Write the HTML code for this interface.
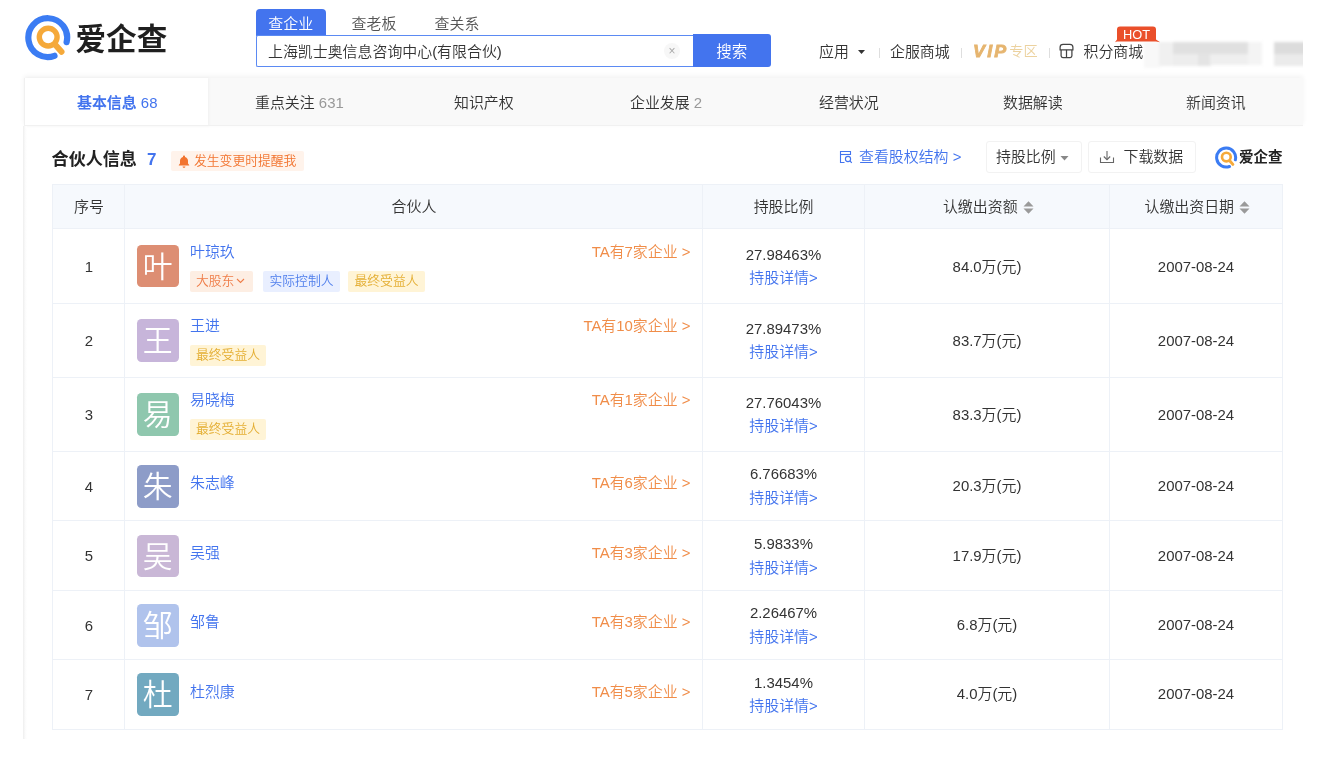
<!DOCTYPE html>
<html lang="zh-CN">
<head>
<meta charset="utf-8">
<title>爱企查 - 上海凯士奥信息咨询中心(有限合伙)</title>
<style>
*{box-sizing:border-box;margin:0;padding:0}
html,body{width:1332px;height:774px;background:#fff;overflow:hidden}
body{will-change:transform}
body{position:relative;font-weight:350;font-family:"Liberation Sans","Noto Sans CJK SC",sans-serif;font-size:14.93px;color:#333;-webkit-font-smoothing:antialiased}
.abs{position:absolute;white-space:nowrap}
a{text-decoration:none;color:inherit}

/* header */
#logo-ico{left:25px;top:14px;width:47px;height:47px}
#logo-txt{left:75.5px;top:16.5px;font-size:30.6px;line-height:44px;font-weight:700;color:#1f1f1f;letter-spacing:0px}
.stab{top:8.5px;height:27px;line-height:29px;font-size:14.93px;color:#555;text-align:center}
#stab1{left:255.5px;width:70.5px;background:#4374ee;color:#fff;border-radius:4px 4px 0 0}
#stab2{left:351px;width:46px}
#stab3{left:434px;width:46px}
#sinput{left:255.5px;top:34.5px;width:439px;height:32px;border:1px solid #5b8af3;border-right:none;border-radius:2px 0 0 2px;background:#fff;font-size:14.93px;line-height:31.5px;padding-left:11.5px;color:#333}
#sclear{left:664px;top:43px;width:16px;height:16px;border-radius:50%;background:#f7f7f7;color:#aaa;font-size:12px;line-height:16px;text-align:center}
#sbtn{left:693px;top:34px;width:77.5px;height:32.5px;background:#4374ee;color:#fff;border-radius:0 3px 3px 0;font-size:15.5px;line-height:35px;text-align:center}
.hl{top:41px;height:22px;line-height:22px;font-size:14.93px;color:#333}
.hsep{top:47.500px;width:1px;height:10px;background:#dedede}

/* nav */
#nav{left:23.500px;top:77.500px;width:1279.500px;height:48.500px;background:#f9f9f9;box-shadow:0 -2px 5px rgba(0,0,0,.05)}
#nav .on{position:absolute;left:0;top:0;width:184.500px;height:100%;background:#fff;box-shadow:1px 0 3px rgba(0,0,0,.04)}
.nt{top:91.5px;height:22px;line-height:22px;font-size:14.93px;color:#333}
.nt i{font-style:normal;color:#999}

/* section head */
#ttl{left:51.600px;top:147px;height:26px;line-height:26px;font-size:17.070px;font-weight:700;color:#222}
#ttl b{color:#4374ee;margin-left:10px;font-size:17px}
#remind{left:171px;top:150.5px;width:132.5px;height:20.5px;background:#fff3eb;border-radius:2px;color:#f2742f;font-size:12.8px;line-height:20.5px;padding-left:23px}
#remind svg{position:absolute;left:6.5px;top:4px}

/* table */
.hd{top:184.500px;height:44px;background:#f6f9fd}
.vl{top:184px;width:1px;height:545.800px;background:#edf1f7}
.hlr{left:51.700px;width:1230.600px;height:1px;background:#edf1f7}
.th{top:196px;height:22px;line-height:22px;font-size:14.93px;color:#333;text-align:center}
.c{text-align:center}
.idx{left:53px;width:72px;font-size:14.93px;color:#333;height:20px;line-height:20px}
.av{left:136.600px;width:42.200px;height:42.700px;border-radius:4.500px;color:#fff;font-size:29.870px;line-height:43.500px;text-align:center}
.nm{left:190px;height:22px;line-height:22px;font-size:14.93px;color:#4374ee}
.tag{height:20.500px;line-height:20.500px;font-size:12.800px;padding:0 0 0 6.500px;border-radius:2px}
.t1{background:#fdeee3;color:#ef7d48;width:63px}
.t2{background:#e9efff;color:#4f7eec;width:77px}
.t3{background:#fff4d6;color:#e4ae33;width:76.500px}
.ta{right:641.5px;height:22px;line-height:22px;font-size:14.93px;color:#f08d49}
.pc{left:703px;width:161px;height:22px;line-height:22px;font-size:14.93px;color:#333}
.pd{left:703px;width:161px;height:22px;line-height:22px;font-size:14.93px;color:#4374ee}
.amt{left:864px;width:246px;height:22px;line-height:22px;font-size:14.93px;color:#333}
.dt{left:1110px;width:172px;height:22px;line-height:22px;font-size:14.93px;color:#333}
</style>
</head>
<body>

<!-- ===== header ===== -->
<svg id="logo-ico" class="abs" viewBox="0 0 47 47">
  <path d="M 41.6 28.2 A 19.4 19.4 0 1 0 29.5 41.8" fill="none" stroke="#3b7cf3" stroke-width="6.2" stroke-linecap="round"/>
  <circle cx="23.2" cy="23.1" r="8.9" fill="none" stroke="#f5a93a" stroke-width="5.4"/>
  <path d="M 30.5 31 L 36.5 37.7" stroke="#f5a93a" stroke-width="6" stroke-linecap="round"/>
</svg>
<div id="logo-txt" class="abs">爱企查</div>

<div id="stab1" class="abs stab">查企业</div>
<div id="stab2" class="abs stab">查老板</div>
<div id="stab3" class="abs stab">查关系</div>
<div id="sinput" class="abs">上海凯士奥信息咨询中心(有限合伙)</div>
<div id="sclear" class="abs">×</div>
<div id="sbtn" class="abs">搜索</div>

<div class="abs hl" style="left:819px">应用</div>
<svg class="abs" style="left:857.500px;top:49.500px" width="7" height="4" viewBox="0 0 7 4"><path d="M0 0h7L3.500 4z" fill="#333"/></svg>
<div class="abs hsep" style="left:878.5px"></div>
<div class="abs hl" style="left:890px">企服商城</div>
<div class="abs hsep" style="left:960.5px"></div>
<div class="abs hl" style="left:972.600px;top:41.400px;color:#e6b56f;font-weight:700;font-style:italic;font-size:16.700px;letter-spacing:2.100px;-webkit-text-stroke:0.800px #e6b56f;transform:scaleX(1.07);transform-origin:0 50%">VIP</div>
<div class="abs hl" style="left:1009.300px;top:40px;color:#ecd29f;font-size:14.200px">专区</div>
<div class="abs hsep" style="left:1048.5px"></div>
<svg class="abs" style="left:1059.200px;top:42.700px" width="15" height="16" viewBox="0 0 15 16" fill="none" stroke="#444" stroke-width="1.250">
  <path d="M1.100 6.900 V4.300 Q1.100 1.300 4.100 1.300 H10.900 Q13.900 1.300 13.900 4.300 V6.900 Z"/>
  <path d="M2.100 6.900 V12.800 Q2.100 14.500 3.800 14.500 H11.200 Q12.900 14.500 12.900 12.800 V6.900"/>
  <path d="M7.500 6.900 V14.500"/>
</svg>
<div class="abs hl" style="left:1083.5px">积分商城</div>
<!-- blurred user area -->
<div id="blur" class="abs" style="left:1136px;top:36px;width:167px;height:36px;overflow:hidden">
 <div class="abs" style="left:0;top:0;width:167px;height:36px;filter:blur(1.800px)">
  <div class="abs" style="left:8px;top:6px;width:16px;height:26px;background:#f8f8f8"></div>
  <div class="abs" style="left:23px;top:6px;width:14px;height:24px;background:#f0f0f0"></div>
  <div class="abs" style="left:36.500px;top:6px;width:76px;height:12px;background:#e0e0e0"></div>
  <div class="abs" style="left:36.500px;top:18px;width:26px;height:12px;background:#ededed"></div>
  <div class="abs" style="left:62px;top:18px;width:12.500px;height:12px;background:#e4e4e4"></div>
  <div class="abs" style="left:74px;top:18px;width:38.500px;height:11px;background:#efefef"></div>
  <div class="abs" style="left:112px;top:6px;width:14px;height:23px;background:#f4f4f4"></div>
  <div class="abs" style="left:138px;top:6px;width:32px;height:12px;background:#dcdcdc"></div>
  <div class="abs" style="left:138px;top:18px;width:32px;height:12px;background:#ebebeb"></div>
 </div>
</div>

<!-- HOT badge -->
<svg class="abs" style="left:1114px;top:25.5px" width="47" height="17" viewBox="0 0 47 17">
  <path d="M3 15.6 L1 16.3 L3 13.5 V3.5 Q3 0.5 6 0.5 H39 Q42 0.5 42 3.5 V13.5 L46 16.2 L42 15.6 Z" fill="#ea4f2a"/>
  <text x="22.5" y="13" text-anchor="middle" font-family="Liberation Sans, sans-serif" font-size="12.8" fill="#fff">HOT</text>
</svg>

<!-- ===== nav ===== -->
<div id="nav" class="abs"><div class="on"></div><div class="abs" style="left:0;top:0;width:1px;height:100%;background:#f0f0f0"></div><div class="abs" style="left:0;bottom:0;width:100%;height:1px;background:#f1f1f1"></div></div>
<div class="abs nt" style="left:77px;color:#4374ee"><b>基本信息</b> 68</div>
<div class="abs nt" style="left:255px">重点关注 <i>631</i></div>
<div class="abs nt" style="left:454px">知识产权</div>
<div class="abs nt" style="left:630px">企业发展 <i>2</i></div>
<div class="abs nt" style="left:819px">经营状况</div>
<div class="abs nt" style="left:1003px">数据解读</div>
<div class="abs nt" style="left:1186px">新闻资讯</div>

<div class="abs" style="left:23.200px;top:126px;width:4px;height:613px;background:linear-gradient(90deg,#f1f1f1 0,#f1f1f1 25%,#fafafa 45%,#fff 100%)"></div>

<!-- ===== section head ===== -->
<div id="ttl" class="abs">合伙人信息<b>7</b></div>
<div id="remind" class="abs">
  <svg width="12" height="13" viewBox="0 0 12 13"><path d="M6 0.6 C6.6 0.6 7 1 7 1.600 V1.900 C8.800 2.400 10 3.900 10 5.800 V8.400 L11.200 10 V10.600 H0.800 V10 L2 8.400 V5.800 C2 3.900 3.200 2.400 5 1.900 V1.600 C5 1 5.400 0.600 6 0.600 Z M4.600 11.400 H7.400 C7.400 12.200 6.800 12.800 6 12.800 S4.600 12.200 4.600 11.400 Z" fill="#f2742f"/></svg>
  发生变更时提醒我
</div>


<!-- ===== right controls ===== -->
<svg class="abs" style="left:839px;top:150px" width="14" height="14" viewBox="0 0 14 14" fill="none" stroke="#4374ee" stroke-width="1.100">
  <path d="M5.500 12.500H1.500V1.500H11.500V5"/><path d="M1.500 4.500H11.500"/><circle cx="9" cy="9" r="2.600"/><path d="M11 11l1.800 1.800"/>
</svg>
<a class="abs" style="left:859px;top:146px;height:22px;line-height:22px;font-size:14.93px;color:#4374ee">查看股权结构 &gt;</a>
<div class="abs" style="left:986px;top:140.500px;width:96px;height:32.500px;border:1px solid #f2f2f2;border-radius:3px"></div>
<div class="abs" style="left:996px;top:146px;height:22px;line-height:22px;font-size:14.93px;color:#333">持股比例</div>
<svg class="abs" style="left:1060px;top:155.500px" width="9" height="5" viewBox="0 0 9 5"><path d="M0.500 0h8L4.500 4.500z" fill="#888"/></svg>
<div class="abs" style="left:1088px;top:140.500px;width:108px;height:32.500px;border:1px solid #f2f2f2;border-radius:3px"></div>
<svg class="abs" style="left:1098.500px;top:149.500px" width="16" height="14" viewBox="0 0 16 14" fill="none" stroke="#666" stroke-width="1.100">
  <path d="M8 1V9.500"/><path d="M4.800 6.500L8 9.700L11.200 6.500"/><path d="M1.500 7.500V12.500H14.500V7.500"/>
</svg>
<div class="abs" style="left:1123.500px;top:146px;height:22px;line-height:22px;font-size:14.93px;color:#333">下载数据</div>
<svg class="abs" style="left:1214.500px;top:145.500px" width="23" height="23" viewBox="0 0 47 47">
  <path d="M 41.6 28.2 A 19.4 19.4 0 1 0 29.5 41.8" fill="none" stroke="#3b7cf3" stroke-width="6.2" stroke-linecap="round"/>
  <circle cx="23.2" cy="22.6" r="8.9" fill="none" stroke="#f5a93a" stroke-width="5.4"/>
  <path d="M 30.5 30.5 L 36.5 37.5" stroke="#f5a93a" stroke-width="6" stroke-linecap="round"/>
</svg>
<div class="abs" style="left:1239px;top:146px;height:22px;line-height:22px;font-size:14.500px;font-weight:700;color:#222">爱企查</div>

<!-- ===== table ===== -->
<div class="abs hd" style="left:52.200px;width:1229.600px"></div>
<div class="abs hlr" style="top:184px"></div>
<div class="abs hlr" style="top:228px"></div>
<div class="abs hlr" style="top:302.5px"></div>
<div class="abs hlr" style="top:376.5px"></div>
<div class="abs hlr" style="top:450.5px"></div>
<div class="abs hlr" style="top:520.1px"></div>
<div class="abs hlr" style="top:589.5px"></div>
<div class="abs hlr" style="top:658.8px"></div>
<div class="abs hlr" style="top:728.800px"></div>
<div class="abs vl" style="left:51.700px"></div>
<div class="abs vl" style="left:124.400px"></div>
<div class="abs vl" style="left:702.300px"></div>
<div class="abs vl" style="left:864px"></div>
<div class="abs vl" style="left:1109.200px"></div>
<div class="abs vl" style="left:1281.600px"></div>
<div class="abs th" style="left:53px;width:72px">序号</div>
<div class="abs th" style="left:125px;width:578px">合伙人</div>
<div class="abs th" style="left:703px;width:161px">持股比例</div>
<div class="abs th" style="left:864px;width:246px">认缴出资额<svg width="11" height="13" viewBox="0 0 11 13" style="margin-left:5px;margin-right:-2.500px;vertical-align:-2px"><path d="M5.500 0.200L10.500 5.400H0.500z M5.500 12.800L0.500 7.600H10.500z" fill="#9a9a9a"/></svg></div>
<div class="abs th" style="left:1110px;width:172px">认缴出资日期<svg width="11" height="13" viewBox="0 0 11 13" style="margin-left:5px;margin-right:-2.500px;vertical-align:-2px"><path d="M5.500 0.200L10.500 5.400H0.500z M5.500 12.800L0.500 7.600H10.500z" fill="#9a9a9a"/></svg></div>
<!-- row 1 -->
<div class="abs idx c" style="top:257px">1</div>
<div class="abs av" style="top:244.600px;background:#dd8e73">叶</div>
<a class="abs nm" style="top:240.7px">叶琼玖</a>
<span class="abs tag t1" style="left:189.5px;top:271px">大股东<svg width="9" height="6" viewBox="0 0 9 6" style="margin-left:2px;vertical-align:1.5px"><path d="M1 1l3.500 3.500L8 1" fill="none" stroke="#ef7d48" stroke-width="1.100"/></svg></span>
<span class="abs tag t2" style="left:263px;top:271px">实际控制人</span>
<span class="abs tag t3" style="left:348px;top:271px">最终受益人</span>
<a class="abs ta" style="top:240.6px">TA有7家企业 ></a>
<div class="abs pc c" style="top:243.6px">27.98463%</div>
<a class="abs pd c" style="top:267.4px">持股详情&gt;</a>
<div class="abs amt c" style="top:255.5px">84.0万(元)</div>
<div class="abs dt c" style="top:255.5px">2007-08-24</div>
<!-- row 2 -->
<div class="abs idx c" style="top:331px">2</div>
<div class="abs av" style="top:319px;background:#c7b5da">王</div>
<a class="abs nm" style="top:314.7px">王进</a>
<span class="abs tag t3" style="left:189.500px;top:345px">最终受益人</span>
<a class="abs ta" style="top:314.6px">TA有10家企业 ></a>
<div class="abs pc c" style="top:317.6px">27.89473%</div>
<a class="abs pd c" style="top:341.4px">持股详情&gt;</a>
<div class="abs amt c" style="top:329.5px">83.7万(元)</div>
<div class="abs dt c" style="top:329.5px">2007-08-24</div>
<!-- row 3 -->
<div class="abs idx c" style="top:405px">3</div>
<div class="abs av" style="top:393.300px;background:#8fc7ae">易</div>
<a class="abs nm" style="top:388.7px">易晓梅</a>
<span class="abs tag t3" style="left:189.500px;top:419px">最终受益人</span>
<a class="abs ta" style="top:388.6px">TA有1家企业 ></a>
<div class="abs pc c" style="top:391.6px">27.76043%</div>
<a class="abs pd c" style="top:415.4px">持股详情&gt;</a>
<div class="abs amt c" style="top:403.5px">83.3万(元)</div>
<div class="abs dt c" style="top:403.5px">2007-08-24</div>
<!-- row 4 -->
<div class="abs idx c" style="top:476.8px">4</div>
<div class="abs av" style="top:465.1px;background:#8d9cc8">朱</div>
<a class="abs nm" style="top:472.3px">朱志峰</a>
<a class="abs ta" style="top:472.3px">TA有6家企业 ></a>
<div class="abs pc c" style="top:463.4px">6.76683%</div>
<a class="abs pd c" style="top:487.2px">持股详情&gt;</a>
<div class="abs amt c" style="top:475.3px">20.3万(元)</div>
<div class="abs dt c" style="top:475.3px">2007-08-24</div>
<!-- row 5 -->
<div class="abs idx c" style="top:546.3px">5</div>
<div class="abs av" style="top:534.6px;background:#c9b7d6">吴</div>
<a class="abs nm" style="top:541.9px">吴强</a>
<a class="abs ta" style="top:541.9px">TA有3家企业 ></a>
<div class="abs pc c" style="top:532.9px">5.9833%</div>
<a class="abs pd c" style="top:556.7px">持股详情&gt;</a>
<div class="abs amt c" style="top:544.8px">17.9万(元)</div>
<div class="abs dt c" style="top:544.8px">2007-08-24</div>
<!-- row 6 -->
<div class="abs idx c" style="top:615.65px">6</div>
<div class="abs av" style="top:603.95px;background:#b0c3ec">邹</div>
<a class="abs nm" style="top:611.3px">邹鲁</a>
<a class="abs ta" style="top:611.3px">TA有3家企业 ></a>
<div class="abs pc c" style="top:602.25px">2.26467%</div>
<a class="abs pd c" style="top:626.05px">持股详情&gt;</a>
<div class="abs amt c" style="top:614.15px">6.8万(元)</div>
<div class="abs dt c" style="top:614.15px">2007-08-24</div>
<!-- row 7 -->
<div class="abs idx c" style="top:684.9px">7</div>
<div class="abs av" style="top:673.2px;background:#72a9c0">杜</div>
<a class="abs nm" style="top:680.6px">杜烈康</a>
<a class="abs ta" style="top:680.6px">TA有5家企业 ></a>
<div class="abs pc c" style="top:671.5px">1.3454%</div>
<a class="abs pd c" style="top:695.3px">持股详情&gt;</a>
<div class="abs amt c" style="top:683.4px">4.0万(元)</div>
<div class="abs dt c" style="top:683.4px">2007-08-24</div>

</body>
</html>
